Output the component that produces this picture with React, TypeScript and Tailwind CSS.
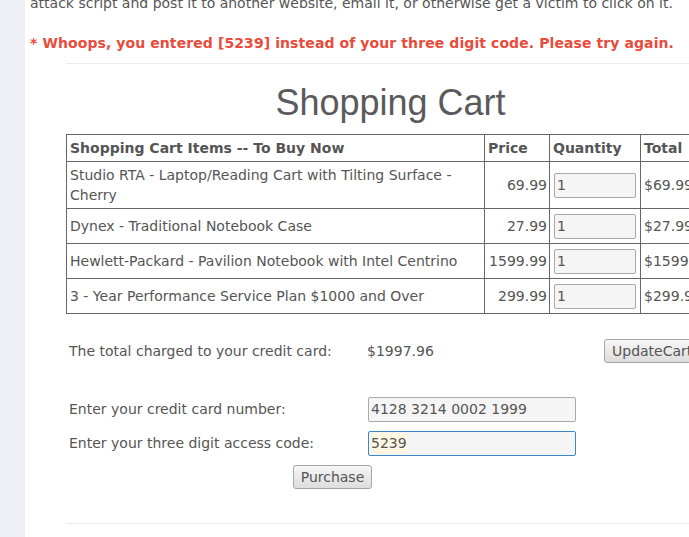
import React from 'react'

const ITEMS = [
  { name: 'Studio RTA - Laptop/Reading Cart with Tilting Surface - Cherry', price: '69.99', total: '$69.99', h: 'h-[47px]' },
  { name: 'Dynex - Traditional Notebook Case', price: '27.99', total: '$27.99', h: 'h-[35px]' },
  { name: 'Hewlett-Packard - Pavilion Notebook with Intel Centrino', price: '1599.99', total: '$1599.99', h: 'h-[35px]' },
  { name: '3 - Year Performance Service Plan $1000 and Over', price: '299.99', total: '$299.99', h: 'h-[35px]' },
]

function Field({ value, focused, w }: { value: string; focused?: boolean; w: string }) {
  return (
    <div
      className={`${w} h-[25px] flex items-center px-[2px] rounded-[2px] bg-[#f5f5f5] border ${
        focused ? 'border-[#3b88c8]' : 'border-[#a9a9a9]'
      }`}
    >
      <span className={focused ? 'bg-[#fdf6e3]' : ''}>{value}</span>
    </div>
  )
}

function Button({ label }: { label: string }) {
  return (
    <button
      type="button"
      className="h-[24px] px-[7px] leading-[20px] whitespace-nowrap border border-[#a6a6a6] rounded-[3px] bg-gradient-to-b from-[#f7f7f7] to-[#dddddd] text-[#555]"
    >
      {label}
    </button>
  )
}

export default function App() {
  return (
    <div className="w-[689px] h-[537px] overflow-hidden flex bg-white text-[14px] text-[#555] font-['DejaVu_Sans',sans-serif]">
      <div className="w-[25px] shrink-0 bg-[#eff0f5]" />
      <div className="w-[760px] shrink-0 pl-[5px] -mt-[7px]">
        <p className="leading-[20px] whitespace-nowrap">
          attack script and post it to another website, email it, or otherwise get a victim to click on it.
        </p>
        <p className="mt-[20px] leading-[20px] font-bold tracking-[0.09px] text-[#e74c3c] whitespace-nowrap">
          * Whoops, you entered [5239] instead of your three digit code. Please try again.
        </p>

        <div className="ml-[36px] mt-[10px] border-t border-[#ebebeb]">
          <h1 className="w-[649px] mt-[18px] text-center text-[36px] leading-[41px] font-['Liberation_Sans',Arial,sans-serif] text-[#5a5a5c]">
            Shopping Cart
          </h1>

          <table className="mt-[11px] table-fixed border-collapse w-[644px]">
            <colgroup>
              <col className="w-[418px]" />
              <col className="w-[65px]" />
              <col className="w-[91px]" />
              <col className="w-[70px]" />
            </colgroup>
            <thead>
              <tr>
                <th className="h-[27px] px-[3px] py-0 border border-[#666] text-left font-bold leading-[20px]">
                  Shopping Cart Items -- To Buy Now
                </th>
                <th className="px-[3px] border border-[#666] text-left font-bold">Price</th>
                <th className="px-[3px] border border-[#666] text-left font-bold">Quantity</th>
                <th className="px-[3px] border border-[#666] text-left font-bold">Total</th>
              </tr>
            </thead>
            <tbody>
              {ITEMS.map((it) => (
                <tr key={it.name}>
                  <td className={`${it.h} px-[3px] py-0 border border-[#666] leading-[20px] align-middle`}>{it.name}</td>
                  <td className="px-[2px] border border-[#666] text-right align-middle whitespace-nowrap">{it.price}</td>
                  <td className="pl-[4px] pr-0 border border-[#666] align-middle">
                    <Field value="1" w="w-[82px]" />
                  </td>
                  <td className="px-[3px] border border-[#666] align-middle whitespace-nowrap">{it.total}</td>
                </tr>
              ))}
            </tbody>
          </table>

          <div className="mt-[25px] flex items-center h-[24px]">
            <span className="w-[301px] pl-[3px]">The total charged to your credit card:</span>
            <span className="w-[237px]">$1997.96</span>
            <Button label="UpdateCart" />
          </div>

          <div className="mt-[34px] flex items-center">
            <span className="w-[302px] pl-[3px]">Enter your credit card number:</span>
            <Field value="4128 3214 0002 1999" w="w-[208px]" />
          </div>
          <div className="mt-[9px] flex items-center">
            <span className="w-[302px] pl-[3px]">Enter your three digit access code:</span>
            <Field value="5239" focused w="w-[208px]" />
          </div>
          <div className="mt-[9px] w-[533px] flex justify-center">
            <Button label="Purchase" />
          </div>

          <div className="mt-[34px] border-t border-[#ebebeb]" />
        </div>
      </div>
    </div>
  )
}
